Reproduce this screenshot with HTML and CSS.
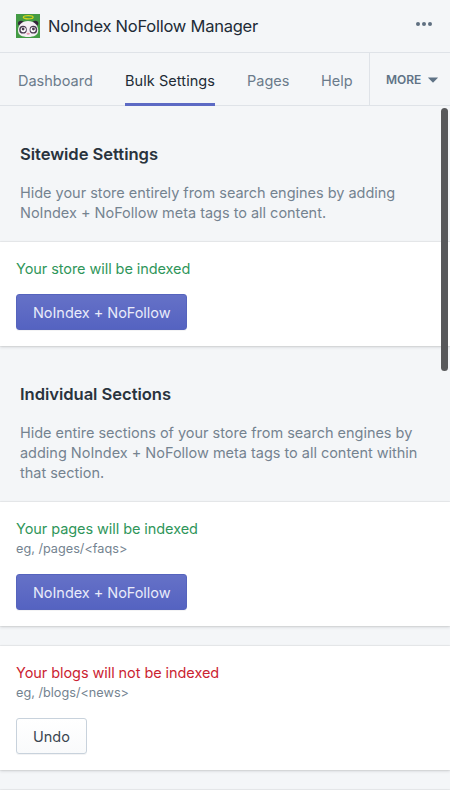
FILE: index.html
```html
<!DOCTYPE html>
<html lang="en">
<head>
    <meta charset="UTF-8">
    <meta name="viewport" content="width=device-width, initial-scale=1.0">
    <title>NoIndex NoFollow Manager</title>
    <link rel="stylesheet" href="styles.css">
</head>
<body>
    <header class="app-bar">
        <svg class="app-icon" width="24" height="24" viewBox="0 0 24 24">
            <rect width="24" height="24" fill="#439b45"/>
            <ellipse cx="5" cy="9.3" rx="3" ry="2.6" fill="#33263a"/>
            <ellipse cx="19.3" cy="9.3" rx="3" ry="2.6" fill="#33263a"/>
            <path d="M12 7C6 7 2 11 2 16.5C2 21 6 23 12 23S22.2 21 22.2 16.5C22.2 11 18 7 12 7Z" fill="#f5eff5"/>
            <ellipse cx="7" cy="15.7" rx="3.8" ry="3.9" fill="#4b3c52"/>
            <ellipse cx="17.4" cy="15.7" rx="3.8" ry="3.9" fill="#4b3c52"/>
            <circle cx="7.3" cy="15.6" r="2.6" fill="#fff"/>
            <circle cx="17.1" cy="15.6" r="2.6" fill="#fff"/>
            <circle cx="7.1" cy="15" r="1.4" fill="#4b3a50"/>
            <circle cx="17.4" cy="15" r="1.4" fill="#4b3a50"/>
            <ellipse cx="12.2" cy="19.8" rx="1.7" ry="1" fill="#e79aac"/>
            <ellipse cx="12.2" cy="3.2" rx="4.9" ry="1.6" fill="none" stroke="#d5d51c" stroke-width="1.3"/>
        </svg>
        <h1 class="app-name">NoIndex NoFollow Manager</h1>
        <svg class="dots" width="16" height="4" viewBox="0 0 16 4" fill="#5f7081">
            <circle cx="2" cy="2" r="2"/>
            <circle cx="8" cy="2" r="2"/>
            <circle cx="14" cy="2" r="2"/>
        </svg>
    </header>

    <nav class="tabs">
        <a class="tab tab-dashboard">Dashboard</a>
        <a class="tab tab-bulk active">Bulk Settings</a>
        <a class="tab tab-pages">Pages</a>
        <a class="tab tab-help">Help</a>
        <button class="more">
            <span>MORE</span>
            <svg width="10" height="6" viewBox="0 0 10 6"><path d="M.6.4h8.8c.5 0 .6.4.3.7L5.5 5.2c-.3.3-.7.3-1 0L.3 1.1C0 .8.1.4.6.4Z" fill="#5f7386"/></svg>
        </button>
    </nav>

    <main>
        <section>
            <div class="intro">
                <h2>Sitewide Settings</h2>
                <p>Hide your store entirely from search engines by adding<br>NoIndex + NoFollow meta tags to all content.</p>
            </div>
            <div class="card">
                <div class="status indexed">Your store will be indexed</div>
                <button class="btn btn-primary">NoIndex + NoFollow</button>
            </div>
        </section>

        <section>
            <div class="intro">
                <h2>Individual Sections</h2>
                <p>Hide entire sections of your store from search engines by<br>adding NoIndex + NoFollow meta tags to all content within<br>that section.</p>
            </div>
            <div class="card">
                <div class="status indexed">Your pages will be indexed</div>
                <div class="hint">eg, /pages/&lt;faqs&gt;</div>
                <button class="btn btn-primary">NoIndex + NoFollow</button>
            </div>
            <div class="card">
                <div class="status not-indexed">Your blogs will not be indexed</div>
                <div class="hint">eg, /blogs/&lt;news&gt;</div>
                <button class="btn">Undo</button>
            </div>
            <div class="card card-next"></div>
        </section>
    </main>
    <div class="scroll-thumb"></div>
</body>
</html>
```

FILE: styles.css
```css
* {
    box-sizing: border-box;
}
body {
    margin: 0;
    height: 800px;
    overflow: hidden;
    background: #f4f6f8;
    color: #212b36;
    font-family: Inter, "Liberation Sans", sans-serif;
    font-size: 14.5px;
}
h1, h2, p {
    margin: 0;
}
button {
    font-family: inherit;
}
.app-bar {
    display: flex;
    align-items: center;
    height: 53px;
    padding: 0 18px 0 16px;
    border-bottom: 1px solid #dfe3e8;
}
.app-name {
    flex: 1;
    margin-left: 8px;
    font-size: 16.5px;
    font-weight: 400;
    letter-spacing: -0.24px;
}
.dots {
    margin-bottom: 5px;
}
.tabs {
    display: flex;
    height: 53px;
    border-bottom: 1px solid #dfe3e8;
    padding-left: 18px;
}
.tab {
    flex-shrink: 0;
    height: 53px;
    margin-right: 32px;
    color: #6b7b8b;
    line-height: 56px;
    white-space: nowrap;
}
.tab-dashboard {
    width: 75px;
}
.tab-bulk {
    width: 90px;
    letter-spacing: 0.07px;
}
.tab-pages {
    width: 42px;
}
.tab-help {
    width: 32px;
    margin-right: 0;
}
.tab.active {
    color: #212b36;
    border-bottom: 3px solid #5c6ac4;
}
.more {
    display: flex;
    align-items: center;
    gap: 7px;
    width: 81px;
    margin-left: auto;
    padding: 1px 0 0 16px;
    border: 0;
    border-left: 1px solid #dfe3e8;
    background: none;
    color: #5f7386;
    font-size: 12px;
    font-weight: 600;
}
.intro {
    padding: 36px 20px 19px;
}
.intro h2 {
    margin-bottom: 17px;
    font-size: 16.6px;
    font-weight: 600;
    line-height: 24px;
    letter-spacing: -0.05px;
    color: #29333d;
}
.intro p {
    color: #748390;
    line-height: 20px;
    letter-spacing: -0.02px;
    white-space: nowrap;
}
.card {
    padding: 17px 16px 16px;
    background: #fff;
    box-shadow: 0 0 0 1px rgba(63, 63, 68, 0.05), 0 1px 3px rgba(63, 63, 68, 0.2);
}
.card + .card {
    margin-top: 20px;
}
.card-next {
    height: 10px;
    padding: 0;
}
.status {
    line-height: 20px;
    letter-spacing: -0.07px;
}
.indexed {
    color: #2f965a;
}
.not-indexed {
    color: #cb2432;
}
.hint {
    color: #748390;
    font-size: 12.7px;
    line-height: 20px;
}
.btn {
    display: block;
    height: 36px;
    margin-top: 15px;
    padding: 0 16px;
    border: 1px solid #c8d2dc;
    border-radius: 3px;
    background: linear-gradient(#fff, #f9fafb);
    box-shadow: 0 1px 0 rgba(22, 29, 37, 0.05);
    color: #3b4650;
    font-size: 14.5px;
    white-space: nowrap;
}
.btn-primary {
    border-color: #5664bd;
    background: linear-gradient(#6571c7, #5563c1);
    color: #e9ebfa;
    letter-spacing: -0.05px;
}
.scroll-thumb {
    position: absolute;
    top: 108px;
    right: 2px;
    width: 7px;
    height: 263px;
    border-radius: 4px;
    background: #58595b;
}
```
